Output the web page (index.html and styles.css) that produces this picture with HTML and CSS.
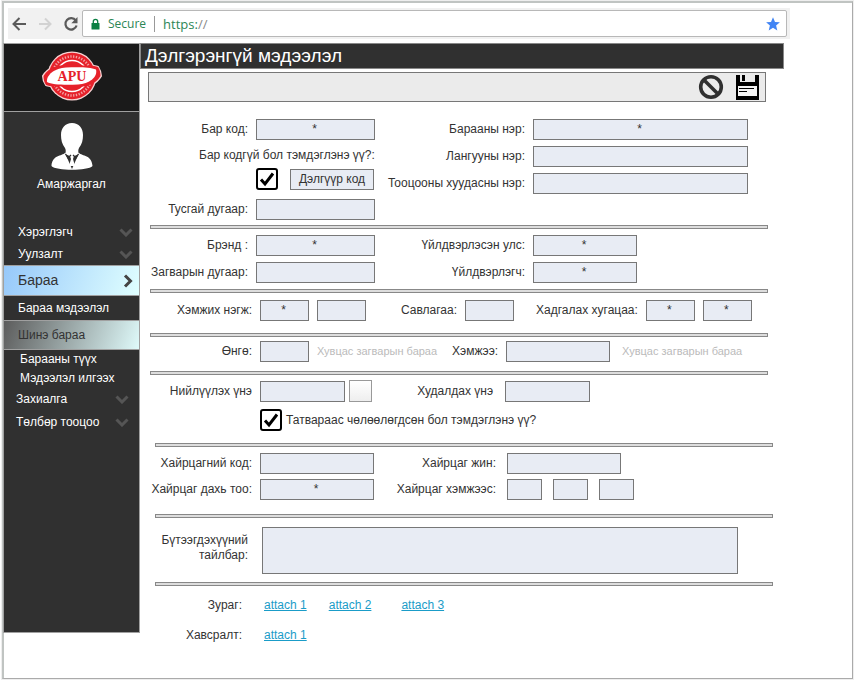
FILE: index.html
```html
<!DOCTYPE html>
<html lang="mn">
<head>
<meta charset="utf-8">
<title>Дэлгэрэнгүй мэдээлэл</title>
<link rel="stylesheet" href="styles.css">
</head>
<body>
<div class="window">
  <header class="browser">
    <button class="nav-btn" type="button" aria-label="Back"><svg width="16" height="16" viewBox="0 0 16 16"><path d="M15 8H3M8.500 2L2.500 8L8.500 14" fill="none" stroke="#5a5a5a" stroke-width="2"/></svg></button>
    <button class="nav-btn" type="button" aria-label="Forward"><svg width="16" height="16" viewBox="0 0 16 16"><path d="M2 8H13M8 2.500L13.500 8L8 13.500" fill="none" stroke="#d2d2d2" stroke-width="2"/></svg></button>
    <button class="nav-btn" type="button" aria-label="Reload"><svg width="16" height="16" viewBox="0 0 16 16"><path d="M12.800 4.500A5.700 5.700 0 1 0 13.600 9.500" fill="none" stroke="#5a5a5a" stroke-width="2.200"/><path d="M14.500 1V7.200H8.300Z" fill="#5a5a5a"/></svg></button>
    <div class="address">
      <svg width="9" height="12" viewBox="0 0 9 12"><rect x="0.500" y="5" width="8" height="6.500" rx="0.500" fill="#0b8043"/><path d="M2.300 5.500V3.500a2.200 2.200 0 0 1 4.400 0V5.500" fill="none" stroke="#0b8043" stroke-width="1.300"/></svg>
      <span class="secure">Secure</span>
      <span class="url">https:<i>//</i></span>
      <svg class="star" width="14" height="14" viewBox="0 0 14 14"><path d="M7 0.300L9 5L13.900 5.300L10.100 8.500L11.300 13.500L7 10.800L2.700 13.500L3.900 8.500L0.100 5.300L5 5Z" fill="#4285f4"/></svg>
    </div>
  </header>
  <div class="app">
    <aside class="sidebar">
      <div class="logo">
        <svg width="60" height="50" viewBox="0 0 60 50" role="img" aria-label="APU">
          <circle cx="30" cy="25" r="24.500" fill="#f8d4d4"/>
          <path d="M1 25C8 13 22 13 32 14C44 15 52 14 56 16C58 19 59 22 59 25C52 37 38 37 28 36C16 35 8 36 4 34C2 31 1 28 1 25Z" fill="#e6212a" stroke="#f8d4d4" stroke-width="2"/>
          <circle cx="30" cy="25" r="23.200" fill="#e6212a"/>
          <circle cx="30" cy="25" r="19.500" fill="none" stroke="#f2a0a2" stroke-width="2.500" stroke-dasharray="1.300 1.500"/>
          <circle cx="30" cy="25" r="15.500" fill="none" stroke="#fff" stroke-width="1.500"/>
          <path d="M1.500 25C8 14 22 13.500 32 14C44 15 52 14 56 16C58 19 58.500 22 58.500 25C52 36 38 36.500 28 36C16 35 8 36 4 34C2 31 1.500 28 1.500 25Z" fill="#e6212a"/>
          <path d="M5 31C4 24 13 17 24 16.500C36 16 48 16 54 18.500C56 26 47 33 36 33.500C24 34 10 34 5 31Z" fill="#fff"/>
          <text x="30" y="30" text-anchor="middle" class="logo-text">APU</text>
        </svg>
      </div>
      <div class="user">
        <svg width="42" height="48" viewBox="0 0 42 48"><path d="M21 0C28 0 32 5 32 12C32 17 31 21 28 25C27 27 27 29 28 31L21 34L14 31C15 29 15 27 14 25C11 21 10 17 10 12C10 5 14 0 21 0Z" fill="#fff"/><path d="M14 30L21 46L28 30C31 33 41 32 41.500 43C37 48 5 48 0.500 43C1 32 11 33 14 30Z" fill="#fff"/><path d="M19 33H23L22 36L24 43H18L20 36Z" fill="#fff"/><path d="M14.500 31L17 35L20 32M27.500 31L25 35L22 32" fill="none" stroke="#303030" stroke-width="1.300"/></svg>
        <span>Амаржаргал</span>
      </div>
      <nav class="menu">
        <a class="item" href="#">Хэрэглэгч <svg class="chev" width="14" height="9" viewBox="0 0 14 9"><path d="M1.500 1.500L7 7L12.500 1.500"/></svg></a>
        <a class="item" href="#">Уулзалт <svg class="chev" width="14" height="9" viewBox="0 0 14 9"><path d="M1.500 1.500L7 7L12.500 1.500"/></svg></a>
        <a class="item current" href="#">Бараа <svg class="arrow" width="10" height="14" viewBox="0 0 10 14"><path d="M2 1.500L7.500 7L2 12.500"/></svg></a>
        <a class="item" href="#">Бараа мэдээлэл</a>
        <a class="item picked" href="#">Шинэ бараа</a>
        <a class="item sub" href="#">Барааны түүх</a>
        <a class="item sub" href="#">Мэдээлэл илгээх</a>
        <a class="item wide" href="#">Захиалга <svg class="chev" width="14" height="9" viewBox="0 0 14 9"><path d="M1.500 1.500L7 7L12.500 1.500"/></svg></a>
        <a class="item wide" href="#">Төлбөр тооцоо <svg class="chev" width="14" height="9" viewBox="0 0 14 9"><path d="M1.500 1.500L7 7L12.500 1.500"/></svg></a>
      </nav>
    </aside>
    <main class="main">
      <h1>Дэлгэрэнгүй мэдээлэл</h1>
      <div class="toolbar">
        <button type="button" aria-label="Cancel"><svg width="26" height="26" viewBox="0 0 26 26"><circle cx="13" cy="13" r="10.300" fill="none" stroke="#303030" stroke-width="3.600"/><path d="M5.500 5.500L20.500 20.500" stroke="#303030" stroke-width="3.600"/></svg></button>
        <button type="button" aria-label="Save"><svg width="23" height="25" viewBox="0 0 23 25"><path d="M0 0H4V7H19V0H23V25H0Z" fill="#000"/><path d="M6 0H9V6H6Z" fill="#000"/><path d="M2 11H21V21H2Z" fill="#f4f4f4"/><path d="M3 13.500H18M3 16.500H11" stroke="#000"/></svg></button>
      </div>
      <form>
        <section class="part codes">
          <div class="stack tight">
            <div class="row"><label class="lab" for="bar">Бар код:</label><input id="bar" class="w-l" value="*"></div>
            <label class="question" for="nobar">Бар кодгүй бол тэмдэглэнэ үү?:</label>
            <div class="row"><span class="lab"></span><input id="nobar" type="checkbox" checked><button class="shop" type="button">Дэлгүүр код</button></div>
            <div class="row last"><label class="lab" for="spec">Тусгай дугаар:</label><input id="spec" class="w-l"></div>
          </div>
          <div class="stack">
            <div class="row"><label class="lab" for="n1">Барааны нэр:</label><input id="n1" class="w-xl" value="*"></div>
            <div class="row"><label class="lab" for="n2">Лангууны нэр:</label><input id="n2" class="w-xl"></div>
            <div class="row"><label class="lab" for="n3">Тооцооны хуудасны нэр:</label><input id="n3" class="w-xl"></div>
          </div>
        </section>
        <hr>
        <section class="part brand">
          <div class="stack">
            <div class="row"><label class="lab" for="br">Брэнд :</label><input id="br" class="w-l" value="*"></div>
            <div class="row"><label class="lab" for="md">Загварын дугаар:</label><input id="md" class="w-l"></div>
          </div>
          <div class="stack">
            <div class="row"><label class="lab" for="ct">Үйлдвэрлэсэн улс:</label><input id="ct" class="w-m" value="*"></div>
            <div class="row"><label class="lab" for="mk">Үйлдвэрлэгч:</label><input id="mk" class="w-m" value="*"></div>
          </div>
        </section>
        <hr>
        <section class="part units">
          <div class="row"><label class="lab" for="u1">Хэмжих нэгж:</label><input id="u1" class="w-s" value="*"><input class="w-s" aria-label="Хэмжих нэгж 2"></div>
          <div class="row"><label for="pk">Савлагаа:</label><input id="pk" class="w-s"></div>
          <div class="row"><label for="k1">Хадгалах хугацаа:</label><input id="k1" class="w-s" value="*"><input class="w-s" value="*" aria-label="Хадгалах хугацаа 2"></div>
        </section>
        <hr>
        <section class="part looks">
          <div class="row"><label class="lab" for="cl">Өнгө:</label><input id="cl" class="w-s"><span class="hint">Хувцас загварын бараа</span></div>
          <div class="row"><label for="sz">Хэмжээ:</label><input id="sz" class="w-m"><span class="hint">Хувцас загварын бараа</span></div>
        </section>
        <hr>
        <section class="part price">
          <div class="row"><label class="lab" for="p1">Нийлүүлэх үнэ</label><input id="p1" class="w-p"><button class="pick" type="button" aria-label="Сонгох"></button></div>
          <div class="row sale"><label class="lab" for="p2">Худалдах үнэ</label><input id="p2" class="w-p"></div>
          <div class="row tax"><span class="lab"></span><input id="tax" type="checkbox" checked><label for="tax">Татвараас чөлөөлөгдсөн бол тэмдэглэнэ үү?</label></div>
        </section>
        <hr class="in">
        <section class="part box">
          <div class="stack">
            <div class="row"><label class="lab" for="b1">Хайрцагний код:</label><input id="b1" class="w-b"></div>
            <div class="row"><label class="lab" for="b2">Хайрцаг дахь тоо:</label><input id="b2" class="w-b" value="*"></div>
          </div>
          <div class="stack">
            <div class="row"><label class="lab" for="b3">Хайрцаг жин:</label><input id="b3" class="w-b"></div>
            <div class="row dims"><label class="lab" for="b4">Хайрцаг хэмжээс:</label><input id="b4" class="w-xs"><input class="w-xs" aria-label="Өргөн"><input class="w-xs" aria-label="Өндөр"></div>
          </div>
        </section>
        <hr class="in">
        <section class="part about">
          <label class="lab" for="ds">Бүтээгдэхүүний тайлбар:</label><textarea id="ds"></textarea>
        </section>
        <hr class="in">
        <section class="part files">
          <div class="links"><span class="lab">Зураг:</span><a href="#">attach 1</a><a href="#">attach 2</a><a class="apart" href="#">attach 3</a></div>
          <div class="links"><span class="lab">Хавсралт:</span><a href="#">attach 1</a></div>
        </section>
      </form>
    </main>
  </div>
</div>
</body>
</html>
```
FILE: styles.css
```css
* { box-sizing: border-box; }

body {
  margin: 0;
  padding: 1px 2px;
  background: #fff;
  color: #333;
  font: 12px/15px "Liberation Sans", Arial, sans-serif;
}

button, input, textarea { font: inherit; color: inherit; margin: 0; border-radius: 0; }

.window {
  min-height: calc(100vh - 3px);
  border: 2px solid #c0c4c2;
  border-right: 1px solid #aaa;
  border-bottom: 1px solid #aaa;
  outline: 1px solid #eee;
}

/* Browser bar */
.browser {
  display: flex;
  align-items: center;
  width: 782px;
  max-width: 100%;
  height: 31px;
  margin: 5px 0 4px 4px;
  padding-right: 3px;
  background: #f1f1f1;
}
.nav-btn { display: flex; width: 26px; padding: 0 0 0 3px; border: 0; background: none; }
.address {
  display: flex;
  flex: 1;
  align-items: center;
  height: 27px;
  margin-left: -4px;
  padding: 0 6px 0 8px;
  border: 1px solid #b8b8b8;
  border-radius: 2px;
  background: #fff;
  color: #2c8656;
  font: 12px/16px "Open Sans", "Noto Sans", sans-serif;
}
.secure { margin-left: 8px; padding-right: 8px; border-right: 1px solid #999; }
.url { margin-left: 8px; font-size: 13px; }
.url i { color: #888; font-style: normal; }
.star { margin-left: auto; }

.app { display: flex; align-items: flex-start; }

/* Sidebar */
.sidebar {
  flex: none;
  width: 137px;
  margin-left: -1px;
  padding-bottom: 198px;
  border: 1px solid #a0a0a0;
  background: #303030;
  color: #fff;
}
.logo {
  display: flex;
  justify-content: center;
  height: 68px;
  padding-top: 7px;
  border-bottom: 1px solid #a0a0a0;
  background: #1a1a1a;
}
.logo-text { font: bold 14px "Liberation Serif", serif; fill: #e6212a; }
.user {
  display: flex;
  flex-direction: column;
  align-items: center;
  gap: 6px;
  padding-top: 11px;
}
.menu { display: flex; flex-direction: column; padding-top: 29px; }
.item {
  display: flex;
  align-items: center;
  justify-content: space-between;
  height: 22px;
  padding: 0 6px 0 14px;
  color: #fff;
  text-decoration: none;
}
.chev path { fill: none; stroke: #555; stroke-width: 3; }
.arrow path { fill: none; stroke: #444; stroke-width: 3; }
.current, .picked { height: 31px; margin: 0 -1px; border: 1px solid #a0a0a0; color: #333; }
.current { font-size: 14px; background: linear-gradient(110deg, #96c8fa, #e0ffff); }
.picked { height: 30px; background: linear-gradient(110deg, #5c5c5c, #dffafa); }
.current + .item { height: 24px; }
.sub { height: 19px; padding-left: 16px; }
.wide { height: 23px; padding-right: 10px; padding-left: 12px; }

/* Main column */
.main { flex: 1; min-width: 0; padding-right: 68px; }
h1 {
  height: 26px;
  margin: 0 0 3px;
  padding-left: 4px;
  border: 1px solid #888;
  background: #303030;
  color: #fff;
  font-size: 19px;
  font-weight: normal;
  line-height: 24px;
}
.toolbar {
  display: flex;
  align-items: center;
  justify-content: flex-end;
  gap: 12px;
  height: 30px;
  margin: 0 18px 0 8px;
  padding-right: 6px;
  border: 1px solid #777;
  background: #ebebeb;
}
.toolbar button { display: flex; padding: 0; border: 0; background: none; }

/* Form */
form { padding-left: 1px; }
hr {
  height: 4px;
  margin: 0 16px 0 9px;
  border: 1px solid #888;
  background: #ddd;
}
hr.in { margin: 0 11px 0 14px; }
.part { display: flex; }
.stack { display: flex; flex-direction: column; gap: 6px; }
.tight { gap: 5px; }
.row { display: flex; align-items: center; gap: 8px; }
.lab { flex: none; width: 107px; text-align: right; white-space: nowrap; }
label { white-space: nowrap; }
.stack + .stack .lab { width: 150px; }

input, textarea { border: 1px solid #777; background: #e8ecf4; }
input { height: 21px; padding: 0 2px 2px 0; text-align: center; }
.w-xs { width: 35px; }
.w-s { width: 49px; }
.w-p { width: 85px; }
.w-m { width: 104px; }
.w-b { width: 114px; }
.w-l { width: 119px; }
.w-xl { width: 215px; }

input[type="checkbox"] {
  appearance: none;
  width: 22px;
  height: 22px;
  padding: 0;
  border: 2px solid #000;
  border-radius: 3px;
  background: #fff url("data:image/svg+xml,%3Csvg xmlns='http://www.w3.org/2000/svg' viewBox='0 0 18 18'%3E%3Cpath d='M3 9.500L7 14L15 3.500' fill='none' stroke='%23000' stroke-width='3'/%3E%3C/svg%3E") center / 18px no-repeat;
}

.codes { padding: 17px 0 5px; }
.question { height: 18px; padding-left: 58px; line-height: 20px; }
.shop { width: 84px; height: 21px; margin-left: 4px; padding: 0; border: 1px solid #777; background: #e8ecf4; }
.last { margin-top: 4px; }
.brand { padding: 6px 0; }
.units { gap: 35px; padding: 7px 0 12px 4px; }
.units .row:last-child { margin-left: -13px; }
.looks { gap: 15px; padding: 4px 0 9px 4px; }
.hint { color: #bbb; font-size: 11px; }
.row + .row .hint { margin-left: 4px; }
.price { flex-wrap: wrap; row-gap: 7px; padding: 5px 0 12px 4px; }
.pick { width: 23px; height: 22px; margin-left: -4px; border: 1px solid #999; background: linear-gradient(#fff, #eee); }
.sale { gap: 12px; margin-left: 14px; }
.tax { flex-basis: 100%; }
.tax label { margin-left: -4px; }
.box { padding: 6px 0 14px 4px; }
.box .stack { gap: 5px; }
.box .stack + .stack .lab { width: 122px; }
.box .stack + .stack .row { gap: 11px; }
.about { align-items: flex-start; padding: 9px 46px 8px 0; }
.about .lab { padding-top: 6px; white-space: normal; }
textarea { flex: 1; height: 47px; margin-left: 14px; resize: none; }
.files { flex-direction: column; gap: 10px; padding: 9px 0; }
.links { display: flex; align-items: center; gap: 22px; height: 20px; }
.links .lab { width: 101px; }
.links a { color: #1a9cc8; }
.links .apart { margin-left: 8px; }
```
